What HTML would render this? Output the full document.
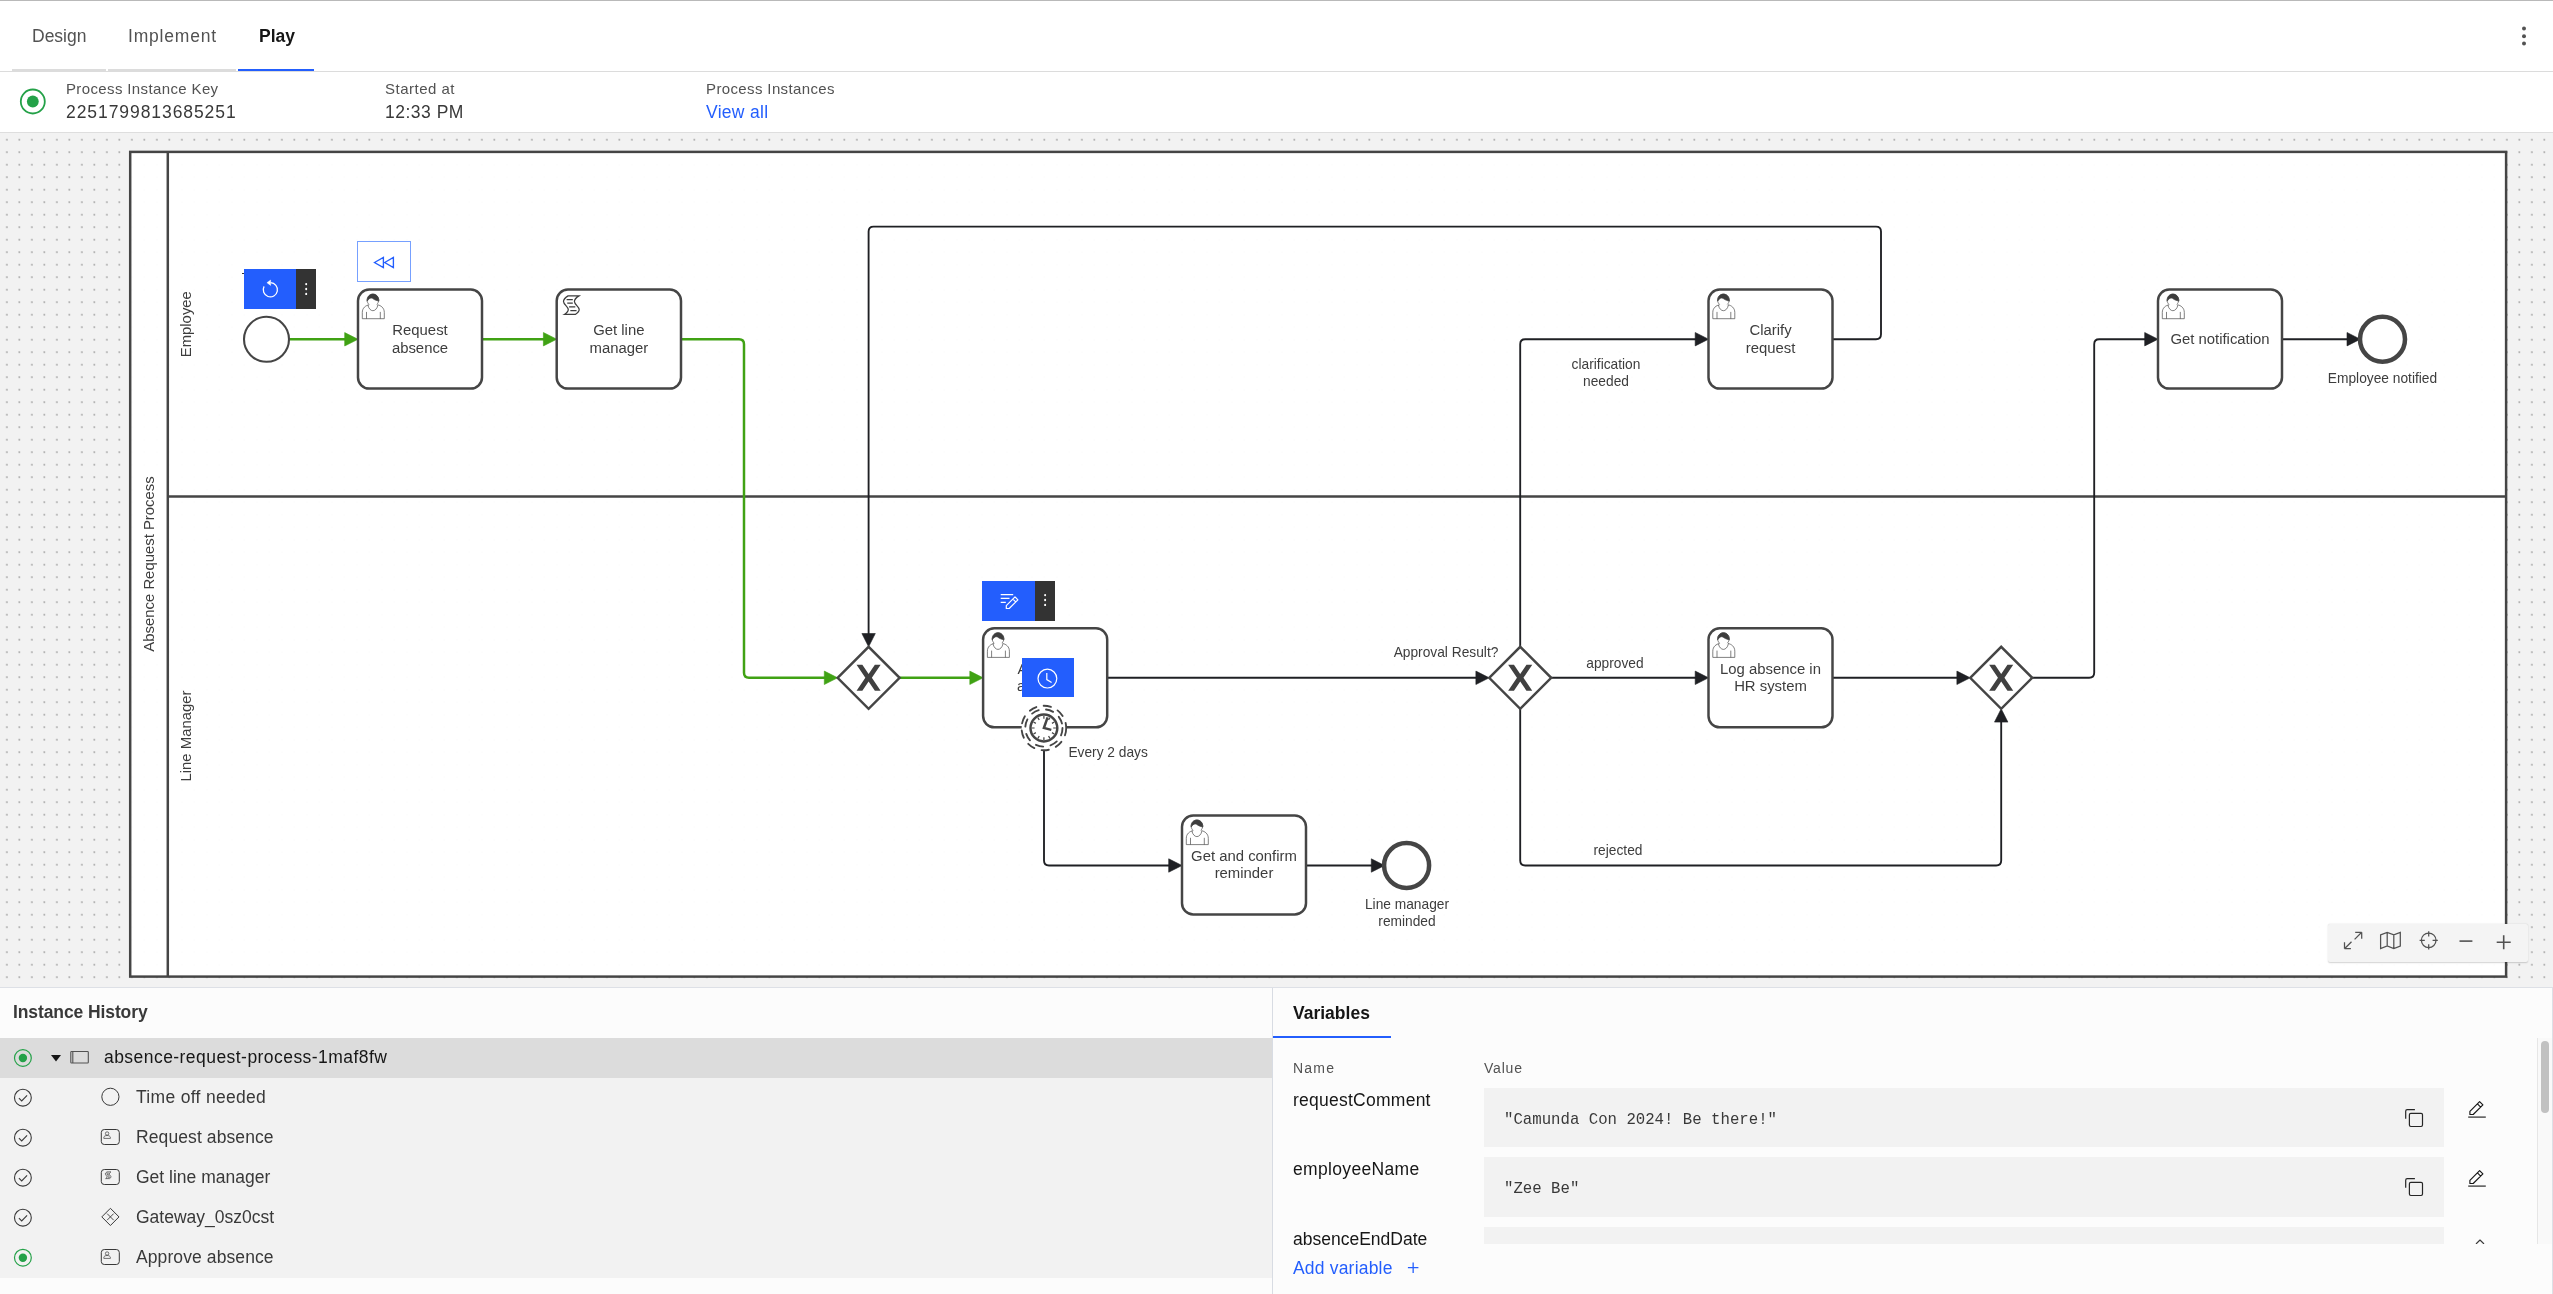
<!DOCTYPE html>
<html><head><meta charset="utf-8">
<style>
*{box-sizing:border-box;margin:0;padding:0}
html,body{width:2553px;height:1294px;overflow:hidden;background:#fff;font-family:"Liberation Sans",sans-serif;color:#161616}
.a{position:absolute;white-space:nowrap}
#topline{left:0;top:0;width:2553px;height:1px;background:#b9b9b9}
.tab{position:absolute;font-size:17.5px;color:#525252;line-height:20px}
.tabu{position:absolute;top:69px;height:2px;background:#dcdcdc}
#hline{left:0;top:71px;width:2553px;height:1px;background:#dcdcdc}
.lbl{position:absolute;font-size:15px;color:#525252;line-height:18px}
.val{position:absolute;font-size:17.5px;color:#161616;line-height:20px}
#canvas{left:0;top:133px;width:2553px;height:854px;background-color:#f2f2f2;
 background-image:radial-gradient(circle at 6.95px 6.7px, rgba(120,120,120,.55) 0.75px, transparent 1.05px);
 background-size:12.5px 12.5px}
#infoline{left:0;top:132px;width:2553px;height:1px;background:#dedede}
#panelline{left:0;top:987px;width:2553px;height:1px;background:#dde0e6}
#bottom{left:0;top:988px;width:2553px;height:306px;background:#fcfcfc}
#vdiv{left:1272px;top:988px;width:1px;height:306px;background:#d8dce3}
.row{position:absolute;left:0;width:1272px;height:40px;background:#f2f2f2}
.rtxt{position:absolute;font-size:17.5px;color:#393939;line-height:20px}
</style></head>
<body>
<div id="root" style="position:absolute;left:0;top:0;width:2553px;height:1294px;overflow:hidden;will-change:transform">
<div class="a" id="topline"></div>
<div class="tab" style="left:32px;top:26px">Design</div>
<div class="tab" style="left:128px;top:26px;letter-spacing:0.8px">Implement</div>
<div class="tab" style="left:259px;top:26px;color:#161616;font-weight:bold">Play</div>
<div class="tabu" style="left:12px;width:94px"></div>
<div class="tabu" style="left:108px;width:128px"></div>
<div class="tabu" style="left:238px;width:76px;background:#235efd"></div>
<div class="a" id="hline"></div>
<svg class="a" style="left:2516px;top:22px" width="16" height="28"><circle cx="8" cy="6.6" r="2" fill="#525252"/><circle cx="8" cy="14.2" r="2" fill="#525252"/><circle cx="8" cy="21.6" r="2" fill="#525252"/></svg>

<svg class="a" style="left:18px;top:87px" width="30" height="30"><circle cx="14.8" cy="14.5" r="12" fill="none" stroke="#24a148" stroke-width="1.8"/><circle cx="14.8" cy="14.5" r="5.9" fill="#24a148"/></svg>
<div class="lbl" style="left:66px;top:80px;letter-spacing:0.37px">Process Instance Key</div>
<div class="val" style="left:66px;top:101.5px;letter-spacing:0.93px;color:#393939">2251799813685251</div>
<div class="lbl" style="left:385px;top:80px;letter-spacing:0.5px">Started at</div>
<div class="val" style="left:385px;top:101.5px;letter-spacing:0.5px;color:#393939">12:33 PM</div>
<div class="lbl" style="left:706px;top:80px;letter-spacing:0.375px">Process Instances</div>
<div class="val" style="left:706px;top:101.5px;color:#235efd;letter-spacing:0.29px">View all</div>
<div class="a" id="infoline"></div>

<div class="a" id="canvas"></div>
<svg class="a" style="left:0;top:133px" width="2553" height="854" viewBox="0 133 2553 854" font-family='"Liberation Sans", sans-serif'><rect x="130.20" y="151.90" width="2375.90" height="824.70" fill="rgba(255,255,255,0.97)" stroke="#454545" stroke-width="2.48"/>
<path d="M167.8,151.90 V976.60" stroke="#454545" stroke-width="2.48"/>
<path d="M167.8,496.6 H2506.10" stroke="#454545" stroke-width="2.48"/>
<text transform="translate(153.7,564) rotate(-90)" x="0" y="0" font-size="14.88" text-anchor="middle" fill="#3d3d3d">Absence Request Process</text>
<text transform="translate(191,324.2) rotate(-90)" x="0" y="0" font-size="14.88" text-anchor="middle" fill="#3d3d3d">Employee</text>
<text transform="translate(191,736) rotate(-90)" x="0" y="0" font-size="14.88" text-anchor="middle" fill="#3d3d3d">Line Manager</text>
<path d="M289.00,339.30 L345.70,339.30" fill="none" stroke="#40a214" stroke-width="2.48" stroke-linejoin="round"/>
<path d="M358.00,339.30 L344.70,346.00 L344.70,332.60 Z" fill="#40a214" stroke="#40a214" stroke-width="0.6" stroke-linejoin="round"/>
<path d="M482.00,339.20 L544.40,339.20" fill="none" stroke="#40a214" stroke-width="2.48" stroke-linejoin="round"/>
<path d="M556.70,339.20 L543.40,345.90 L543.40,332.50 Z" fill="#40a214" stroke="#40a214" stroke-width="0.6" stroke-linejoin="round"/>
<path d="M681.00,339.20 L739.00,339.20 Q744.00,339.20 744.00,344.20 L744.00,672.80 Q744.00,677.80 749.00,677.80 L825.30,677.80" fill="none" stroke="#40a214" stroke-width="2.48" stroke-linejoin="round"/>
<path d="M837.60,677.80 L824.30,684.50 L824.30,671.10 Z" fill="#40a214" stroke="#40a214" stroke-width="0.6" stroke-linejoin="round"/>
<path d="M899.60,677.80 L970.80,677.80" fill="none" stroke="#40a214" stroke-width="2.48" stroke-linejoin="round"/>
<path d="M983.10,677.80 L969.80,684.50 L969.80,671.10 Z" fill="#40a214" stroke="#40a214" stroke-width="0.6" stroke-linejoin="round"/>
<path d="M1107.20,677.80 L1476.90,677.80" fill="none" stroke="#1f2024" stroke-width="1.86" stroke-linejoin="round"/>
<path d="M1489.20,677.80 L1475.90,684.50 L1475.90,671.10 Z" fill="#1f2024" stroke="#1f2024" stroke-width="0.6" stroke-linejoin="round"/>
<path d="M1520.20,646.80 L1520.20,344.20 Q1520.20,339.20 1525.20,339.20 L1696.20,339.20" fill="none" stroke="#1f2024" stroke-width="1.86" stroke-linejoin="round"/>
<path d="M1708.50,339.20 L1695.20,345.90 L1695.20,332.50 Z" fill="#1f2024" stroke="#1f2024" stroke-width="0.6" stroke-linejoin="round"/>
<path d="M1551.20,677.80 L1696.20,677.80" fill="none" stroke="#1f2024" stroke-width="1.86" stroke-linejoin="round"/>
<path d="M1708.50,677.80 L1695.20,684.50 L1695.20,671.10 Z" fill="#1f2024" stroke="#1f2024" stroke-width="0.6" stroke-linejoin="round"/>
<path d="M1520.20,708.80 L1520.20,860.50 Q1520.20,865.50 1525.20,865.50 L1996.20,865.50 Q2001.20,865.50 2001.20,860.50 L2001.20,721.10" fill="none" stroke="#1f2024" stroke-width="1.86" stroke-linejoin="round"/>
<path d="M2001.20,708.80 L2007.90,722.10 L1994.50,722.10 Z" fill="#1f2024" stroke="#1f2024" stroke-width="0.6" stroke-linejoin="round"/>
<path d="M1832.50,677.80 L1957.90,677.80" fill="none" stroke="#1f2024" stroke-width="1.86" stroke-linejoin="round"/>
<path d="M1970.20,677.80 L1956.90,684.50 L1956.90,671.10 Z" fill="#1f2024" stroke="#1f2024" stroke-width="0.6" stroke-linejoin="round"/>
<path d="M2032.20,677.80 L2089.20,677.80 Q2094.20,677.80 2094.20,672.80 L2094.20,344.20 Q2094.20,339.20 2099.20,339.20 L2145.70,339.20" fill="none" stroke="#1f2024" stroke-width="1.86" stroke-linejoin="round"/>
<path d="M2158.00,339.20 L2144.70,345.90 L2144.70,332.50 Z" fill="#1f2024" stroke="#1f2024" stroke-width="0.6" stroke-linejoin="round"/>
<path d="M2282.00,339.20 L2348.00,339.20" fill="none" stroke="#1f2024" stroke-width="1.86" stroke-linejoin="round"/>
<path d="M2360.30,339.20 L2347.00,345.90 L2347.00,332.50 Z" fill="#1f2024" stroke="#1f2024" stroke-width="0.6" stroke-linejoin="round"/>
<path d="M1832.50,339.20 L1876.00,339.20 Q1881.00,339.20 1881.00,334.20 L1881.00,231.60 Q1881.00,226.60 1876.00,226.60 L873.60,226.60 Q868.60,226.60 868.60,231.60 L868.60,634.50" fill="none" stroke="#1f2024" stroke-width="1.86" stroke-linejoin="round"/>
<path d="M868.60,646.80 L861.90,633.50 L875.30,633.50 Z" fill="#1f2024" stroke="#1f2024" stroke-width="0.6" stroke-linejoin="round"/>
<path d="M1044.00,750.50 L1044.00,860.50 Q1044.00,865.50 1049.00,865.50 L1169.70,865.50" fill="none" stroke="#1f2024" stroke-width="1.86" stroke-linejoin="round"/>
<path d="M1182.00,865.50 L1168.70,872.20 L1168.70,858.80 Z" fill="#1f2024" stroke="#1f2024" stroke-width="0.6" stroke-linejoin="round"/>
<path d="M1306.00,865.50 L1372.30,865.50" fill="none" stroke="#1f2024" stroke-width="1.86" stroke-linejoin="round"/>
<path d="M1384.60,865.50 L1371.30,872.20 L1371.30,858.80 Z" fill="#1f2024" stroke="#1f2024" stroke-width="0.6" stroke-linejoin="round"/>
<circle cx="266.50" cy="339.30" r="22.5" fill="#fff" stroke="#454545" stroke-width="2.1"/>
<rect x="358.00" y="289.60" width="124.00" height="99.00" rx="11.2" ry="11.2" fill="#fff" stroke="#454545" stroke-width="2.48"/>
<g transform="translate(376.50,304.20)" fill="#fff" stroke="#4a4a4a" stroke-width="0.7"><path d="M-7.3,0.5 C-10.8,1.3 -14.2,3.6 -14.2,8.3 L-14.2,14.5 L7.8,14.5 L7.8,8.3 C7.8,3.6 4.4,1.3 0.9,0.5"/><path d="M0.3,0.2 C1.4,-0.9 2.3,-2.5 2.3,-4.3 C2.3,-7.5 -0.3,-10.1 -3.6,-10.1 C-6.9,-10.1 -9.5,-7.5 -9.5,-4.3 C-9.5,-2.5 -8.6,-0.9 -7.5,0.2"/><path d="M-8.6,0.8 C-7.9,4.6 -5.6,6.5 -3.6,6.5 C-1.6,6.5 0.7,4.6 1.4,0.8" fill="none"/><path d="M-10.0,7.7 V14.5 M3.8,7.7 V14.5" fill="none"/><path d="M-9.3,-3.1 C-9.3,-7.6 -6.7,-10.1 -3.6,-10.1 C-0.4,-10.1 2.3,-7.6 2.3,-3.1 C0.5,-3.4 -1.5,-4.2 -2.6,-4.9 C-3.6,-5.7 -4.4,-6.2 -5.3,-6.2 C-6.9,-6.2 -8.2,-4.8 -9.3,-3.1 Z" fill="#3d3d3d" stroke="#3d3d3d"/></g>
<text x="420.00" y="334.80" font-size="14.88" text-anchor="middle" fill="#3d3d3d" >Request</text>
<text x="420.00" y="352.50" font-size="14.88" text-anchor="middle" fill="#3d3d3d" >absence</text>
<rect x="556.70" y="289.60" width="124.30" height="99.00" rx="11.2" ry="11.2" fill="#fff" stroke="#454545" stroke-width="2.48"/>
<path d="M575.30,314.40 c 12.359,-7.778 -9.921,-9.820 3.682,-18.523 l -10.915,0 c -13.603,8.703 8.677,10.745 -3.682,18.523 z M566.62,299.52 l 6.20,0 m -5.58,3.72 l 5.58,0 m -3.72,3.72 l 6.20,0 m -4.96,3.72 l 6.20,0" fill="#fff" stroke="#3d3d3d" stroke-width="1.24"/>
<text x="618.85" y="334.80" font-size="14.88" text-anchor="middle" fill="#3d3d3d" >Get line</text>
<text x="618.85" y="352.50" font-size="14.88" text-anchor="middle" fill="#3d3d3d" >manager</text>
<rect x="983.10" y="628.30" width="124.10" height="99.00" rx="11.2" ry="11.2" fill="#fff" stroke="#454545" stroke-width="2.48"/>
<g transform="translate(1001.60,642.90)" fill="#fff" stroke="#4a4a4a" stroke-width="0.7"><path d="M-7.3,0.5 C-10.8,1.3 -14.2,3.6 -14.2,8.3 L-14.2,14.5 L7.8,14.5 L7.8,8.3 C7.8,3.6 4.4,1.3 0.9,0.5"/><path d="M0.3,0.2 C1.4,-0.9 2.3,-2.5 2.3,-4.3 C2.3,-7.5 -0.3,-10.1 -3.6,-10.1 C-6.9,-10.1 -9.5,-7.5 -9.5,-4.3 C-9.5,-2.5 -8.6,-0.9 -7.5,0.2"/><path d="M-8.6,0.8 C-7.9,4.6 -5.6,6.5 -3.6,6.5 C-1.6,6.5 0.7,4.6 1.4,0.8" fill="none"/><path d="M-10.0,7.7 V14.5 M3.8,7.7 V14.5" fill="none"/><path d="M-9.3,-3.1 C-9.3,-7.6 -6.7,-10.1 -3.6,-10.1 C-0.4,-10.1 2.3,-7.6 2.3,-3.1 C0.5,-3.4 -1.5,-4.2 -2.6,-4.9 C-3.6,-5.7 -4.4,-6.2 -5.3,-6.2 C-6.9,-6.2 -8.2,-4.8 -9.3,-3.1 Z" fill="#3d3d3d" stroke="#3d3d3d"/></g>
<text x="1045.15" y="673.50" font-size="14.88" text-anchor="middle" fill="#3d3d3d" >Approve</text>
<text x="1045.15" y="691.20" font-size="14.88" text-anchor="middle" fill="#3d3d3d" >absence</text>
<rect x="1182.00" y="815.50" width="124.00" height="99.00" rx="11.2" ry="11.2" fill="#fff" stroke="#454545" stroke-width="2.48"/>
<g transform="translate(1200.50,830.10)" fill="#fff" stroke="#4a4a4a" stroke-width="0.7"><path d="M-7.3,0.5 C-10.8,1.3 -14.2,3.6 -14.2,8.3 L-14.2,14.5 L7.8,14.5 L7.8,8.3 C7.8,3.6 4.4,1.3 0.9,0.5"/><path d="M0.3,0.2 C1.4,-0.9 2.3,-2.5 2.3,-4.3 C2.3,-7.5 -0.3,-10.1 -3.6,-10.1 C-6.9,-10.1 -9.5,-7.5 -9.5,-4.3 C-9.5,-2.5 -8.6,-0.9 -7.5,0.2"/><path d="M-8.6,0.8 C-7.9,4.6 -5.6,6.5 -3.6,6.5 C-1.6,6.5 0.7,4.6 1.4,0.8" fill="none"/><path d="M-10.0,7.7 V14.5 M3.8,7.7 V14.5" fill="none"/><path d="M-9.3,-3.1 C-9.3,-7.6 -6.7,-10.1 -3.6,-10.1 C-0.4,-10.1 2.3,-7.6 2.3,-3.1 C0.5,-3.4 -1.5,-4.2 -2.6,-4.9 C-3.6,-5.7 -4.4,-6.2 -5.3,-6.2 C-6.9,-6.2 -8.2,-4.8 -9.3,-3.1 Z" fill="#3d3d3d" stroke="#3d3d3d"/></g>
<text x="1244.00" y="860.70" font-size="14.88" text-anchor="middle" fill="#3d3d3d" >Get and confirm</text>
<text x="1244.00" y="878.40" font-size="14.88" text-anchor="middle" fill="#3d3d3d" >reminder</text>
<rect x="1708.50" y="289.60" width="124.00" height="99.00" rx="11.2" ry="11.2" fill="#fff" stroke="#454545" stroke-width="2.48"/>
<g transform="translate(1727.00,304.20)" fill="#fff" stroke="#4a4a4a" stroke-width="0.7"><path d="M-7.3,0.5 C-10.8,1.3 -14.2,3.6 -14.2,8.3 L-14.2,14.5 L7.8,14.5 L7.8,8.3 C7.8,3.6 4.4,1.3 0.9,0.5"/><path d="M0.3,0.2 C1.4,-0.9 2.3,-2.5 2.3,-4.3 C2.3,-7.5 -0.3,-10.1 -3.6,-10.1 C-6.9,-10.1 -9.5,-7.5 -9.5,-4.3 C-9.5,-2.5 -8.6,-0.9 -7.5,0.2"/><path d="M-8.6,0.8 C-7.9,4.6 -5.6,6.5 -3.6,6.5 C-1.6,6.5 0.7,4.6 1.4,0.8" fill="none"/><path d="M-10.0,7.7 V14.5 M3.8,7.7 V14.5" fill="none"/><path d="M-9.3,-3.1 C-9.3,-7.6 -6.7,-10.1 -3.6,-10.1 C-0.4,-10.1 2.3,-7.6 2.3,-3.1 C0.5,-3.4 -1.5,-4.2 -2.6,-4.9 C-3.6,-5.7 -4.4,-6.2 -5.3,-6.2 C-6.9,-6.2 -8.2,-4.8 -9.3,-3.1 Z" fill="#3d3d3d" stroke="#3d3d3d"/></g>
<text x="1770.50" y="334.80" font-size="14.88" text-anchor="middle" fill="#3d3d3d" >Clarify</text>
<text x="1770.50" y="352.50" font-size="14.88" text-anchor="middle" fill="#3d3d3d" >request</text>
<rect x="1708.50" y="628.30" width="124.00" height="99.00" rx="11.2" ry="11.2" fill="#fff" stroke="#454545" stroke-width="2.48"/>
<g transform="translate(1727.00,642.90)" fill="#fff" stroke="#4a4a4a" stroke-width="0.7"><path d="M-7.3,0.5 C-10.8,1.3 -14.2,3.6 -14.2,8.3 L-14.2,14.5 L7.8,14.5 L7.8,8.3 C7.8,3.6 4.4,1.3 0.9,0.5"/><path d="M0.3,0.2 C1.4,-0.9 2.3,-2.5 2.3,-4.3 C2.3,-7.5 -0.3,-10.1 -3.6,-10.1 C-6.9,-10.1 -9.5,-7.5 -9.5,-4.3 C-9.5,-2.5 -8.6,-0.9 -7.5,0.2"/><path d="M-8.6,0.8 C-7.9,4.6 -5.6,6.5 -3.6,6.5 C-1.6,6.5 0.7,4.6 1.4,0.8" fill="none"/><path d="M-10.0,7.7 V14.5 M3.8,7.7 V14.5" fill="none"/><path d="M-9.3,-3.1 C-9.3,-7.6 -6.7,-10.1 -3.6,-10.1 C-0.4,-10.1 2.3,-7.6 2.3,-3.1 C0.5,-3.4 -1.5,-4.2 -2.6,-4.9 C-3.6,-5.7 -4.4,-6.2 -5.3,-6.2 C-6.9,-6.2 -8.2,-4.8 -9.3,-3.1 Z" fill="#3d3d3d" stroke="#3d3d3d"/></g>
<text x="1770.50" y="673.50" font-size="14.88" text-anchor="middle" fill="#3d3d3d" >Log absence in</text>
<text x="1770.50" y="691.20" font-size="14.88" text-anchor="middle" fill="#3d3d3d" >HR system</text>
<rect x="2158.00" y="289.60" width="124.00" height="99.00" rx="11.2" ry="11.2" fill="#fff" stroke="#454545" stroke-width="2.48"/>
<g transform="translate(2176.50,304.20)" fill="#fff" stroke="#4a4a4a" stroke-width="0.7"><path d="M-7.3,0.5 C-10.8,1.3 -14.2,3.6 -14.2,8.3 L-14.2,14.5 L7.8,14.5 L7.8,8.3 C7.8,3.6 4.4,1.3 0.9,0.5"/><path d="M0.3,0.2 C1.4,-0.9 2.3,-2.5 2.3,-4.3 C2.3,-7.5 -0.3,-10.1 -3.6,-10.1 C-6.9,-10.1 -9.5,-7.5 -9.5,-4.3 C-9.5,-2.5 -8.6,-0.9 -7.5,0.2"/><path d="M-8.6,0.8 C-7.9,4.6 -5.6,6.5 -3.6,6.5 C-1.6,6.5 0.7,4.6 1.4,0.8" fill="none"/><path d="M-10.0,7.7 V14.5 M3.8,7.7 V14.5" fill="none"/><path d="M-9.3,-3.1 C-9.3,-7.6 -6.7,-10.1 -3.6,-10.1 C-0.4,-10.1 2.3,-7.6 2.3,-3.1 C0.5,-3.4 -1.5,-4.2 -2.6,-4.9 C-3.6,-5.7 -4.4,-6.2 -5.3,-6.2 C-6.9,-6.2 -8.2,-4.8 -9.3,-3.1 Z" fill="#3d3d3d" stroke="#3d3d3d"/></g>
<text x="2220.00" y="344.10" font-size="14.88" text-anchor="middle" fill="#3d3d3d" >Get notification</text>
<path d="M837.60,677.80 L868.60,646.80 L899.60,677.80 L868.60,708.80 Z" fill="#fff" stroke="#454545" stroke-width="2.48" stroke-linejoin="miter"/>
<path d="M856.55,664.85 L865.34,677.80 L856.55,690.75 L862.35,690.75 L868.60,681.55 L874.85,690.75 L880.65,690.75 L871.86,677.80 L880.65,664.85 L874.85,664.85 L868.60,674.05 L862.35,664.85 Z" fill="#404040"/>
<path d="M1489.20,677.80 L1520.20,646.80 L1551.20,677.80 L1520.20,708.80 Z" fill="#fff" stroke="#454545" stroke-width="2.48" stroke-linejoin="miter"/>
<path d="M1508.15,664.85 L1516.94,677.80 L1508.15,690.75 L1513.95,690.75 L1520.20,681.55 L1526.45,690.75 L1532.25,690.75 L1523.46,677.80 L1532.25,664.85 L1526.45,664.85 L1520.20,674.05 L1513.95,664.85 Z" fill="#404040"/>
<path d="M1970.20,677.80 L2001.20,646.80 L2032.20,677.80 L2001.20,708.80 Z" fill="#fff" stroke="#454545" stroke-width="2.48" stroke-linejoin="miter"/>
<path d="M1989.15,664.85 L1997.94,677.80 L1989.15,690.75 L1994.95,690.75 L2001.20,681.55 L2007.45,690.75 L2013.25,690.75 L2004.46,677.80 L2013.25,664.85 L2007.45,664.85 L2001.20,674.05 L1994.95,664.85 Z" fill="#404040"/>
<circle cx="1406.60" cy="865.50" r="22.5" fill="#fff" stroke="#454545" stroke-width="4.5"/>
<circle cx="2382.50" cy="339.20" r="22.5" fill="#fff" stroke="#454545" stroke-width="4.5"/>
<circle cx="1043.90" cy="728.00" r="22.3" fill="#fff" stroke="#454545" stroke-width="1.86" stroke-dasharray="7.44" stroke-linecap="round"/>
<circle cx="1043.90" cy="728.00" r="18.6" fill="none" stroke="#454545" stroke-width="1.86" stroke-dasharray="7.44" stroke-linecap="round"/>
<circle cx="1043.90" cy="728.00" r="13.4" fill="#fff" stroke="#454545" stroke-width="2.48"/>
<path d="M1043.90,718.70 L1043.90,716.00 M1048.55,719.95 L1049.90,717.61 M1051.95,723.35 L1054.29,722.00 M1053.20,728.00 L1055.90,728.00 M1051.95,732.65 L1054.29,734.00 M1048.55,736.05 L1049.90,738.39 M1043.90,737.30 L1043.90,740.00 M1039.25,736.05 L1037.90,738.39 M1035.85,732.65 L1033.51,734.00 M1034.60,728.00 L1031.90,728.00 M1035.85,723.35 L1033.51,722.00 M1039.25,719.95 L1037.90,717.61 " stroke="#454545" stroke-width="1.24"/>
<path d="M1047.60,717.40 L1043.90,728.00 L1051.30,729.90" fill="none" stroke="#454545" stroke-width="2.48"/>
<text x="1068.40" y="756.80" font-size="13.76" text-anchor="start" fill="#3d3d3d" >Every 2 days</text>
<text x="1407.00" y="909.20" font-size="13.76" text-anchor="middle" fill="#3d3d3d" >Line manager</text>
<text x="1407.00" y="925.50" font-size="13.76" text-anchor="middle" fill="#3d3d3d" >reminded</text>
<text x="2382.50" y="382.60" font-size="13.76" text-anchor="middle" fill="#3d3d3d" >Employee notified</text>
<text x="1606.00" y="369.20" font-size="13.76" text-anchor="middle" fill="#3d3d3d" >clarification</text>
<text x="1606.00" y="386.20" font-size="13.76" text-anchor="middle" fill="#3d3d3d" >needed</text>
<text x="1446.00" y="656.90" font-size="13.76" text-anchor="middle" fill="#3d3d3d" >Approval Result?</text>
<text x="1615.00" y="667.80" font-size="13.76" text-anchor="middle" fill="#3d3d3d" >approved</text>
<text x="1618.00" y="854.70" font-size="13.76" text-anchor="middle" fill="#3d3d3d" >rejected</text></svg>
<div class="a" style="left:242px;top:272.8px;width:2.6px;height:1.3px;background:#333"></div>
<div class="a" style="left:244px;top:269px;width:52.4px;height:39.5px;background:#235efd"></div>
<div class="a" style="left:296.4px;top:269px;width:20.1px;height:39.5px;background:#333"></div>
<svg class="a" style="left:256px;top:276px" width="28" height="28" viewBox="256 276 28 28"><path d="M264.1,286.4 A7.1,7.1 0 1 0 270.6,282.7" fill="none" stroke="#fff" stroke-width="1.25"/><path d="M266.9,282.7 L270.6,280.0 L270.6,285.4 Z" fill="#fff" stroke="#fff" stroke-width="0.4" stroke-linejoin="round"/></svg>
<svg class="a" style="left:296.4px;top:269px" width="20" height="40" viewBox="296.4 269 20 40"><ellipse cx="306.6" cy="284.1" rx="1.0" ry="1.2" fill="#fff"/><ellipse cx="306.6" cy="289.0" rx="1.0" ry="1.2" fill="#fff"/><ellipse cx="306.6" cy="293.9" rx="1.0" ry="1.2" fill="#fff"/></svg>
<div class="a" style="left:357.2px;top:241.2px;width:53.4px;height:40.6px;background:#fff;border:1.5px solid #76a0ff"></div>
<svg class="a" style="left:372px;top:252px" width="24" height="20" viewBox="0 0 24 20"><path d="M2.5,10.5 L11.4,5.5 L11.4,15.6 Z M12.7,10.5 L21.4,5.5 L21.4,15.6 Z" fill="none" stroke="#235efd" stroke-width="1.35" stroke-linejoin="miter"/></svg>
<div class="a" style="left:982.4px;top:581px;width:53px;height:39.6px;background:#235efd"></div>
<div class="a" style="left:1035.4px;top:581px;width:20px;height:39.6px;background:#333"></div>
<svg class="a" style="left:1035.4px;top:581px" width="20" height="40" viewBox="1035.4 581 20 40"><ellipse cx="1045.5" cy="595.1" rx="1.0" ry="1.2" fill="#fff"/><ellipse cx="1045.5" cy="600.0" rx="1.0" ry="1.2" fill="#fff"/><ellipse cx="1045.5" cy="604.9" rx="1.0" ry="1.2" fill="#fff"/></svg>
<svg class="a" style="left:990px;top:585px" width="40" height="32" viewBox="990 585 40 32"><path d="M1000.7,594.7 H1013.2 M1000.7,598.4 H1009.5 M1000.7,602.3 H1005.8" stroke="#fff" stroke-width="1.2"/><path d="M1006.3,605.6 L1015.0,596.9 L1017.9,599.8 L1009.2,608.5 L1006.3,608.5 Z M1012.9,599.1 L1015.7,601.9" fill="none" stroke="#fff" stroke-width="1.2" stroke-linejoin="round"/></svg>
<div class="a" style="left:1021.5px;top:657.9px;width:52.8px;height:39.6px;background:#235efd"></div>
<svg class="a" style="left:1034px;top:664px" width="28" height="28" viewBox="1034 664 28 28"><circle cx="1047.4" cy="678.6" r="9.4" fill="none" stroke="#fff" stroke-width="1.2"/><path d="M1046.8,673.0 V679.6 L1051.6,682.6" fill="none" stroke="#fff" stroke-width="1.2"/></svg>

<div class="a" style="left:2327.8px;top:924.1px;width:200px;height:38px;background:#f4f4f4;border-radius:2px;box-shadow:0 0.5px 1.5px rgba(0,0,0,0.18)"></div>
<svg class="a" style="left:2327.8px;top:924.1px" width="200" height="38" viewBox="0 0 200 38">
<g fill="none" stroke="#525252" stroke-width="1.25">
<path d="M16.5,24.7 L23.5,17.7 M16.5,24.7 H22.9 M16.5,24.7 V18.2 M33.7,8.3 L26.6,15.4 M33.7,8.3 H27.2 M33.7,8.3 V14.8"/>
<path d="M52.6,10.9 L59.2,8.4 L65.8,10.9 L72.3,8.4 V22.0 L65.8,24.6 L59.2,22.0 L52.6,24.6 Z M59.2,8.4 V22.0 M65.8,10.9 V24.6"/>
<circle cx="100.7" cy="16.3" r="7.3"/>
<path d="M100.7,7.2 V12.4 M100.7,20.2 V25.4 M91.6,16.3 H96.8 M104.6,16.3 H109.8"/>
<path d="M131.5,17.1 H144.4" stroke-width="1.6"/>
<path d="M168.7,18.2 H182.7 M175.7,11.2 V25.2" stroke-width="1.6"/>
</g></svg>


<div class="a" id="panelline"></div>
<div class="a" id="bottom"></div>
<div class="a" id="vdiv"></div>
<div class="a" style="left:13px;top:1001px;font-size:17.5px;font-weight:bold;color:#393939;line-height:22px;letter-spacing:-0.1px">Instance History</div>
<div class="row" style="top:1038px;background:#dcdcdc"></div>
<div class="row" style="top:1078px;height:200px"></div>
<svg class="a" style="left:0;top:1038px" width="130" height="240" viewBox="0 1038 130 240">
<g fill="none" stroke-width="1.2">
<circle cx="22.9" cy="1058" r="8.4" stroke="#24a148"/>
<circle cx="22.9" cy="1058" r="4.2" fill="#24a148" stroke="none"/>
<path d="M51,1055 H61 L56,1061.5 Z" fill="#161616" stroke="none"/>
<rect x="70.8" y="1051.5" width="17.5" height="11.5" rx="0.8" stroke="#525252" stroke-width="1.1"/>
<path d="M72.8,1051.5 V1063" stroke="#525252" stroke-width="1.1"/>
<g stroke="#393939" stroke-width="1.1">
<circle cx="22.9" cy="1097.7" r="8.4"/><path d="M18.9,1098.2 L21.7,1100.9 L27.1,1095.3"/>
<circle cx="22.9" cy="1137.7" r="8.4"/><path d="M18.9,1138.2 L21.7,1140.9 L27.1,1135.3"/>
<circle cx="22.9" cy="1177.7" r="8.4"/><path d="M18.9,1178.2 L21.7,1180.9 L27.1,1175.3"/>
<circle cx="22.9" cy="1217.7" r="8.4"/><path d="M18.9,1218.2 L21.7,1220.9 L27.1,1215.3"/>
</g>
<circle cx="22.9" cy="1257.7" r="8.4" stroke="#24a148"/>
<circle cx="22.9" cy="1257.7" r="4.2" fill="#24a148" stroke="none"/>
<g stroke="#393939" stroke-width="1">
<circle cx="110.4" cy="1096.8" r="8.6"/>
<rect x="101.3" y="1129.5" width="18" height="15" rx="3"/>
<rect x="101.3" y="1169.5" width="18" height="15" rx="3"/>
<path d="M110.4,1208.3 L119.0,1216.9 L110.4,1225.5 L101.8,1216.9 Z"/>
<path d="M107.1,1213.6 L113.7,1220.2 M113.7,1213.6 L107.1,1220.2" stroke-width="0.9"/>
<rect x="101.3" y="1249.5" width="18" height="15" rx="3"/>
</g>
<g stroke="#393939" stroke-width="0.7" fill="none">
<circle cx="107.1" cy="1133.5" r="1.7"/><path d="M103.8,1138.4 V1137.6 C103.8,1136.3 105.2,1135.5 107.1,1135.5 C109,1135.5 110.4,1136.3 110.4,1137.6 V1138.4 Z"/>
<circle cx="107.1" cy="1253.5" r="1.7"/><path d="M103.8,1258.4 V1257.6 C103.8,1256.3 105.2,1255.5 107.1,1255.5 C109,1255.5 110.4,1256.3 110.4,1257.6 V1258.4 Z"/>
<path d="M109.60,1178.60 c 4.485,-2.823 -3.600,-3.564 1.336,-6.722 l -3.961,0 c -4.936,3.158 3.149,3.899 -1.336,6.722 z M106.45,1173.20 l 2.25,0 m -2.02,1.35 l 2.02,0 m -1.35,1.35 l 2.25,0 m -1.80,1.35 l 2.25,0" stroke-width="0.7"/>
</g>
</g>
</svg>
<div class="rtxt" style="left:104px;top:1047px;color:#161616;letter-spacing:0.45px">absence-request-process-1maf8fw</div>
<div class="rtxt" style="left:136px;top:1087px;letter-spacing:0.31px">Time off needed</div>
<div class="rtxt" style="left:136px;top:1127px;letter-spacing:0.1px">Request absence</div>
<div class="rtxt" style="left:136px;top:1167px">Get line manager</div>
<div class="rtxt" style="left:136px;top:1207px">Gateway_0sz0cst</div>
<div class="rtxt" style="left:136px;top:1247px;letter-spacing:0.1px">Approve absence</div>

<div class="a" style="left:1293px;top:1002px;font-size:17.5px;font-weight:bold;color:#161616;line-height:22px">Variables</div>
<div class="a" style="left:1273px;top:1036px;width:118px;height:2px;background:#235efd"></div>
<div class="a" style="left:1293px;top:1059px;font-size:14px;color:#525252;line-height:18px;letter-spacing:1.2px">Name</div>
<div class="a" style="left:1484px;top:1059px;font-size:14px;color:#525252;line-height:18px;letter-spacing:0.8px">Value</div>
<div class="a" style="left:1273px;top:1040px;width:1264px;height:204px;overflow:hidden">
 <div class="a" style="left:211px;top:48px;width:960px;height:59px;background:#f2f2f2"></div>
 <div class="a" style="left:211px;top:117px;width:960px;height:60px;background:#f2f2f2"></div>
 <div class="a" style="left:211px;top:187px;width:960px;height:60px;background:#f2f2f2"></div>
 <div class="a" style="left:231px;top:69.5px;font-family:'Liberation Mono',monospace;font-size:15.7px;color:#393939;line-height:20px">"Camunda Con 2024! Be there!"</div>
 <div class="a" style="left:231px;top:138.5px;font-family:'Liberation Mono',monospace;font-size:15.7px;color:#393939;line-height:20px">"Zee Be"</div>
 <svg class="a" style="left:1120px;top:50px" width="90" height="200" viewBox="2393 1090 90 200">
  <g fill="none" stroke="#262626" stroke-width="1.2">
   <rect x="2409.4" y="1113.3" width="13.1" height="13.2" rx="1.4"/>
   <path d="M2405.7,1118.7 V1111.2 Q2405.7,1109.7 2407.2,1109.7 H2414.9"/>
   <rect x="2409.4" y="1182.3" width="13.1" height="13.2" rx="1.4"/>
   <path d="M2405.7,1187.7 V1180.2 Q2405.7,1178.7 2407.2,1178.7 H2414.9"/>
  </g>
 </svg>
 <svg class="a" style="left:1180px;top:50px" width="50" height="200" viewBox="2453 1090 50 200">
  <g fill="none" stroke="#161616" stroke-width="1.15" stroke-linejoin="round">
   <path d="M2469.9,1114.5 L2469.9,1111.3 L2479.6,1101.6 L2482.9,1104.9 L2473.2,1114.5 Z M2477.4,1103.8 L2480.7,1107.1"/>
   <path d="M2468.2,1117.1 H2485.8" stroke="#393939" stroke-width="1.3"/>
   <path d="M2469.9,1183.5 L2469.9,1180.3 L2479.6,1170.6 L2482.9,1173.9 L2473.2,1183.5 Z M2477.4,1172.8 L2480.7,1176.1"/>
   <path d="M2468.2,1186.1 H2485.8" stroke="#393939" stroke-width="1.3"/>
   <path d="M2476,1244 L2480,1240 L2484,1244" stroke="#393939"/>
  </g>
 </svg>
</div>
<div class="a" style="left:1293px;top:1089px;font-size:17.5px;color:#161616;line-height:22px;letter-spacing:0.25px">requestComment</div>
<div class="a" style="left:1293px;top:1158px;font-size:17.5px;color:#161616;line-height:22px;letter-spacing:0.33px">employeeName</div>
<div class="a" style="left:1293px;top:1228px;font-size:17.5px;color:#161616;line-height:22px">absenceEndDate</div>
<div class="a" style="left:1293px;top:1257px;font-size:17.5px;color:#235efd;line-height:22px;letter-spacing:0.19px">Add variable</div>
<svg class="a" style="left:1404px;top:1259px" width="18" height="18"><path d="M3.9,8.7 H14.4 M9.15,3.5 V14" stroke="#235efd" stroke-width="1.3"/></svg>
<div class="a" style="left:2537px;top:1038px;width:15px;height:206px;background:#f9f9f9;border-left:1px solid #e6e6e6"></div>
<div class="a" style="left:2541px;top:1041px;width:8px;height:72px;background:#c1c1c1;border-radius:4px"></div>
<div class="a" style="left:2552px;top:988px;width:1px;height:306px;background:#dde0e6"></div>

</div>
</body></html>
